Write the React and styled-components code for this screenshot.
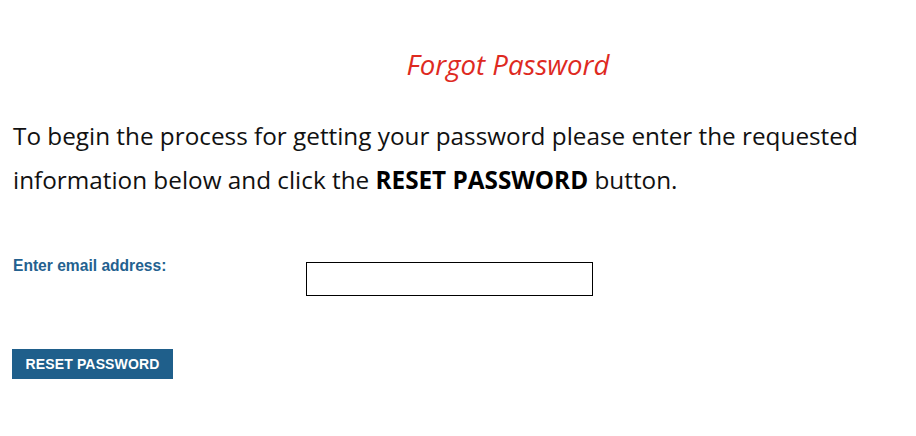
import React from "react";
import styled, { createGlobalStyle } from "styled-components";

const GlobalStyle = createGlobalStyle`
  body {
    margin: 0;
    background: #fff;
  }
`;

const Page = styled.div`
  padding: 44px 12px 0 12px;
`;

const Title = styled.h1`
  margin: 0;
  padding-left: 100px;
  text-align: center;
  font-family: "Open Sans", sans-serif;
  font-style: italic;
  font-weight: 400;
  font-size: 27.6px;
  line-height: 40px;
  color: #de2a1f;
`;

const Intro = styled.p`
  margin: 30px 0 0 1px;
  font-family: "Open Sans", sans-serif;
  font-size: 24.3px;
  line-height: 44px;
  color: #111;

  b {
    font-weight: 700;
    color: #000;
  }
`;

const Row = styled.div`
  display: grid;
  grid-template-columns: 294px 287px;
  align-items: start;
  margin-top: 56px;
`;

const Label = styled.label`
  font-family: "Liberation Sans", Arial, sans-serif;
  font-weight: 700;
  font-size: 15.6px;
  line-height: 16px;
  color: #23618f;
  padding-left: 1px;
`;

const Input = styled.input`
  box-sizing: border-box;
  width: 287px;
  height: 34px;
  border: 1px solid #000;
  margin: 4px 0 0 0;
  padding: 0 4px;
  font-size: 14px;
  outline: none;
`;

const Button = styled.button`
  display: block;
  margin-top: 53px;
  width: 161px;
  height: 30px;
  border: 0;
  background: #1f5f8b;
  color: #fff;
  font-family: "Liberation Sans", Arial, sans-serif;
  font-weight: 700;
  font-size: 14px;
  letter-spacing: 0.15px;
  cursor: pointer;
`;

export default function App() {
  return (
    <>
      <GlobalStyle />
      <Page>
        <Title>Forgot Password</Title>
        <Intro>
          To begin the process for getting your password please enter the requested
          information below and click the <b>RESET PASSWORD</b> button.
        </Intro>
        <Row>
          <Label htmlFor="email">Enter email address:</Label>
          <Input id="email" type="text" />
        </Row>
        <Button>RESET PASSWORD</Button>
      </Page>
    </>
  );
}
